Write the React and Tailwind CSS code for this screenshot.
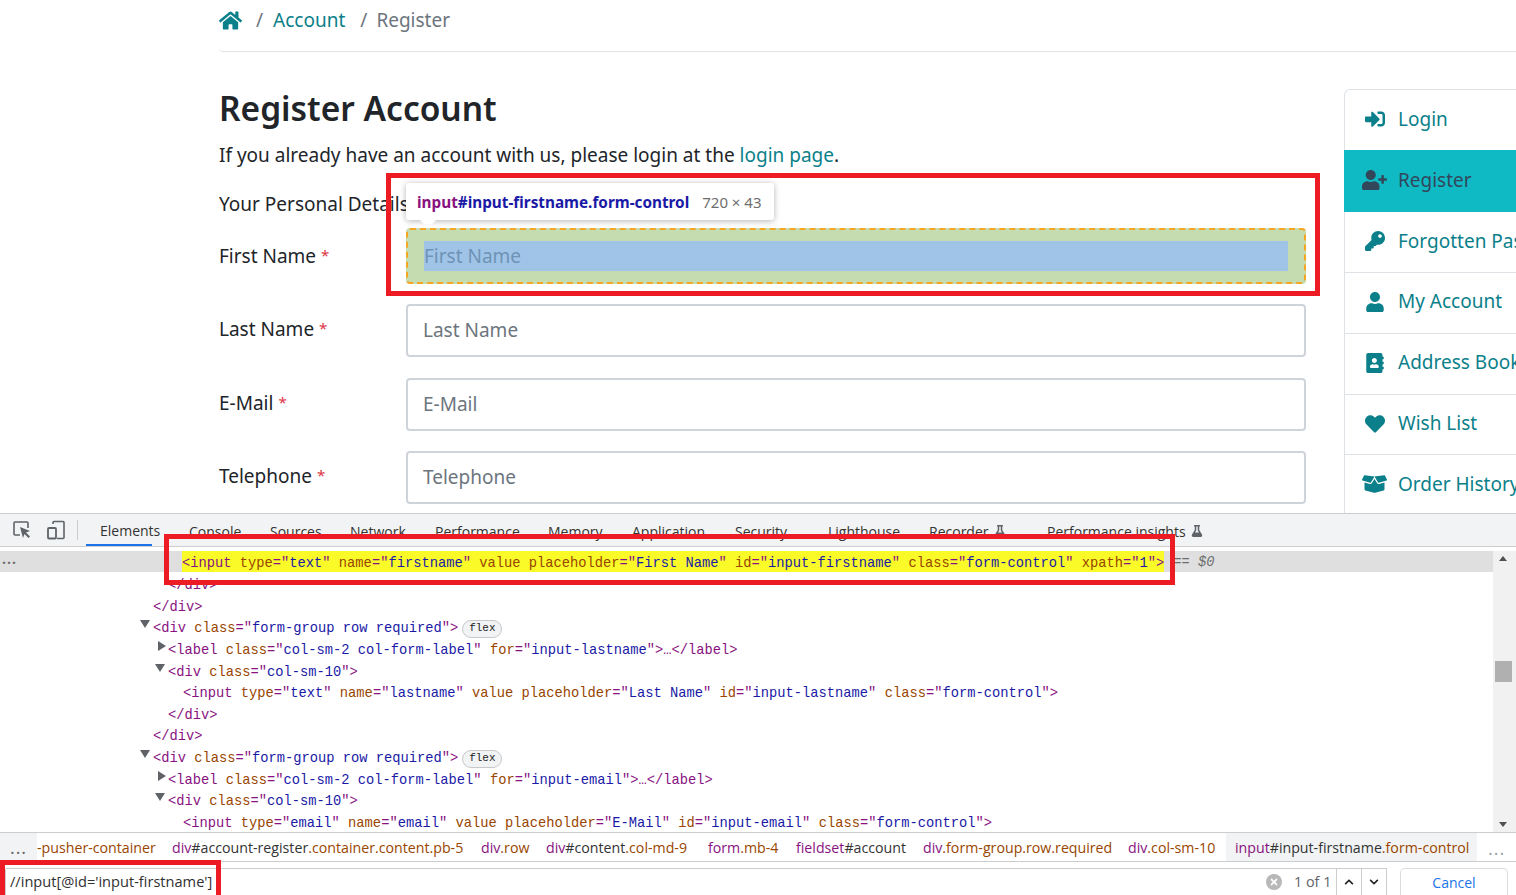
import React from "react";
import { FaHome, FaSignInAlt, FaUserPlus, FaKey, FaUser, FaAddressBook, FaHeart, FaBoxOpen, FaFlask, FaChevronUp, FaChevronDown, FaTimes } from "react-icons/fa";

const P = ({ children }) => <span className="text-[#881280]">{children}</span>;
const N = ({ children }) => <span className="text-[#994500]">{children}</span>;
const V = ({ children }) => <span className="text-[#1a1aa6]">{children}</span>;
const Attr = ({ n, v }) => (
  <>
    {" "}
    <N>{n}</N>
    <P>="</P>
    <V>{v}</V>
    <P>"</P>
  </>
);
const Open = ({ tag, attrs, end = ">" }) => (
  <>
    <P>{"<" + tag}</P>
    {attrs.map(([n, v]) => (
      <Attr key={n} n={n} v={v} />
    ))}
    <P>{end}</P>
  </>
);
const Tri = ({ open }) =>
  open ? (
    <span className="absolute left-[-13px] top-[5px] h-0 w-0 border-x-[5px] border-t-[8px] border-x-transparent border-t-[#5f6368]" />
  ) : (
    <span className="absolute left-[-10px] top-[4px] h-0 w-0 border-y-[5px] border-l-[8px] border-y-transparent border-l-[#5f6368]" />
  );
const Flex = () => (
  <span className="ml-[4px] inline-block h-[18px] w-[40px] rounded-[9px] border border-[#c8c8c8] bg-[#f1f3f4] text-center align-middle font-['Liberation_Mono'] text-[11px] leading-[15px] text-[#222]">
    flex
  </span>
);
const Line = ({ indent, children }) => (
  <div className={`relative h-[21.65px] pt-[3px] whitespace-pre leading-[21px] ${indent}`}>{children}</div>
);

const Row = ({ label, children }) => (
  <div className="flex h-[52px] items-center">
    <div className="relative top-[-1px] w-[187px] text-[19px] leading-[30px] text-[#212529]">
      {label}
      <span className="relative top-[-2px] ml-[5px] text-[15px] text-[#dc3545]">*</span>
    </div>
    {children}
  </div>
);
const TextInput = ({ ph }) => (
  <div className="flex h-[53px] w-[900px] items-center rounded-[4px] border-2 border-[#ced4da] px-[15px] text-[19px] text-[#6c757d]">{ph}</div>
);

const Side = ({ icon, label, active }) => (
  <div
    className={`flex items-center gap-[11px] pb-[2px] pl-[17px] text-[19px] whitespace-nowrap ${
      active ? "-mt-[1px] -ml-[1px] h-[62px] bg-[#0fbac5] pl-[18px] text-[#33475b]" : "h-[60.9px] border-b border-[#dee2e6] text-[#0b7f8a]"
    }`}
  >
    <span className="flex h-[20px] w-[25px] shrink-0 items-center justify-center">{icon}</span>
    {label}
  </div>
);

export default function App() {
  return (
    <div className="relative h-[895px] w-[1516px] overflow-hidden bg-white font-['Noto_Sans',sans-serif]">
      {/* page */}
      <div className="h-[513px] overflow-hidden pl-[219px]">
        <div className="flex h-[52px] items-center rounded-bl-[4px] border-b border-[#e3e3e3] pb-[11px] text-[19px]">
          <FaHome className="text-[23px] text-[#0b7f8a]" />
          <span className="ml-[14px] text-[#6c757d]">/</span>
          <span className="ml-[10px] text-[#0b7f8a]">Account</span>
          <span className="ml-[15px] text-[#6c757d]">/</span>
          <span className="ml-[9px] text-[#6c757d]">Register</span>
        </div>
        <div className="flex">
          <div className="w-[1087px]">
            <h1 className="mt-[32px] text-[33.5px] leading-[48px] font-semibold text-[#212529]">Register Account</h1>
            <p className="mt-[8px] text-[19px] leading-[30px] text-[#212529]">
              If you already have an account with us, please login at the <span className="text-[#0b7f8a]">login page</span>.
            </p>
            <div className="mt-[19px] text-[19px] leading-[30px] text-[#212529]">Your Personal Details</div>
            <div className="mt-[12px] flex flex-col gap-[21.5px]">
              <Row label="First Name">
                <div className="mb-[2px] flex h-[56px] w-[900px] items-center rounded-[4px] border-2 border-dashed border-[#f5a623] bg-[#c4dcb0] px-[16px]">
                  <div className="flex h-[30px] flex-1 items-center bg-[#9fc4e8] text-[19px] text-[#6f93b5]">First Name</div>
                </div>
              </Row>
              <Row label="Last Name"><TextInput ph="Last Name" /></Row>
              <Row label="E-Mail"><TextInput ph="E-Mail" /></Row>
              <Row label="Telephone"><TextInput ph="Telephone" /></Row>
            </div>
          </div>
          <div className="ml-[38px] mt-[37px] h-[425px] flex-1 rounded-tl-[6px] border-t border-l border-[#dee2e6]">
            <Side icon={<FaSignInAlt className="h-[20px] w-[20px]" />} label="Login" />
            <Side icon={<FaUserPlus className="h-[20px] w-[25px]" />} label="Register" active />
            <Side icon={<FaKey className="h-[20px] w-[20px]" />} label="Forgotten Password" />
            <Side icon={<FaUser className="h-[20px] w-[18px]" />} label="My Account" />
            <Side icon={<FaAddressBook className="h-[20px] w-[18px]" />} label="Address Book" />
            <Side icon={<FaHeart className="h-[20px] w-[20px]" />} label="Wish List" />
            <Side icon={<FaBoxOpen className="h-[20px] w-[25px]" />} label="Order History" />
          </div>
        </div>
      </div>

      {/* devtools */}
      <div className="flex h-[382px] flex-col border-t border-[#cdcdcd]">
        <div className="flex h-[33px] items-center border-b border-[#cdcdcd] bg-[#f1f3f4] font-['Open_Sans',sans-serif] text-[14px] text-[#333]">
          <div className="flex h-[20px] w-[78px] items-center gap-[14px] border-r border-[#cdcdcd] pl-[12px]">
            <svg width="20" height="20" viewBox="0 0 20 20" className="shrink-0">
              <path d="M8 15H3a1 1 0 0 1-1-1V3a1 1 0 0 1 1-1h12a1 1 0 0 1 1 1v5" fill="none" stroke="#5f6368" strokeWidth="1.6" />
              <path d="M8 7l10 4-4 1.6 4 4-1.5 1.5-4-4L11 18z" fill="#5f6368" />
            </svg>
            <svg width="20" height="20" viewBox="0 0 20 20" className="shrink-0">
              <path d="M7 4V2.5a1 1 0 0 1 1-1h9a1 1 0 0 1 1 1v15a1 1 0 0 1-1 1h-6" fill="none" stroke="#5f6368" strokeWidth="1.6" />
              <rect x="2" y="8" width="8" height="10.5" rx="1" fill="none" stroke="#5f6368" strokeWidth="1.8" />
            </svg>
          </div>
          <div className="ml-[8px] flex h-full items-center">
            <div className="flex h-full w-[66px] items-center border-b-2 border-[#1a73e8] pt-[2px] pl-[14px]">Elements</div>
            <div className="ml-[37px] flex h-full items-center pt-[2px]">
              <div className="w-[81px]">Console</div>
              <div className="w-[80px]">Sources</div>
              <div className="w-[85px]">Network</div>
              <div className="w-[113px]">Performance</div>
              <div className="w-[84px]">Memory</div>
              <div className="w-[103px]">Application</div>
              <div className="w-[93px]">Security</div>
              <div className="w-[101px]">Lighthouse</div>
              <div className="flex w-[118px] items-center gap-[5px]">Recorder <FaFlask className="text-[12px] text-[#5f6368]" /></div>
              <div className="flex items-center gap-[5px] whitespace-nowrap">Performance insights <FaFlask className="text-[12px] text-[#5f6368]" /></div>
            </div>
          </div>
        </div>

        <div className="flex h-[285px] overflow-hidden pt-[4px] font-['Liberation_Mono',monospace] text-[13.75px] text-[#881280]">
          <div className="min-w-0 flex-1 overflow-hidden">
            <div className="relative flex h-[21px] items-center bg-[#dfdfdf] pl-[182px] whitespace-pre">
              <span className="absolute left-[2px] top-[1px] font-['Open_Sans'] text-[14px] leading-[14px] font-bold tracking-[1px] text-[#6e6e6e]">...</span>
              <span className="h-full bg-[#fafa28] leading-[26px]">
                <Open tag="input" attrs={[["type", "text"], ["name", "firstname"]]} end="" /> <N>value</N> <N>placeholder</N><P>="</P><V>First Name</V><P>"</P>
                <Attr n="id" v="input-firstname" />
                <Attr n="class" v="form-control" />
                <Attr n="xpath" v="1" />
                <P>{">"}</P>
              </span>
              <span className="relative top-[2px] ml-[9px] text-[#6e6e6e] italic">== $0</span>
            </div>
            <Line indent="pl-[168px]"><P>{"</div>"}</P></Line>
            <Line indent="pl-[153px]"><P>{"</div>"}</P></Line>
            <Line indent="ml-[153px]"><Tri open /><Open tag="div" attrs={[["class", "form-group row required"]]} /><Flex /></Line>
            <Line indent="ml-[168px]"><Tri /><Open tag="label" attrs={[["class", "col-sm-2 col-form-label"], ["for", "input-lastname"]]} /><P>…</P><P>{"</label>"}</P></Line>
            <Line indent="ml-[168px]"><Tri open /><Open tag="div" attrs={[["class", "col-sm-10"]]} /></Line>
            <Line indent="pl-[183px]"><Open tag="input" attrs={[["type", "text"], ["name", "lastname"]]} end="" /> <N>value</N> <N>placeholder</N><P>="</P><V>Last Name</V><P>"</P><Attr n="id" v="input-lastname" /><Attr n="class" v="form-control" /><P>{">"}</P></Line>
            <Line indent="pl-[168px]"><P>{"</div>"}</P></Line>
            <Line indent="pl-[153px]"><P>{"</div>"}</P></Line>
            <Line indent="ml-[153px]"><Tri open /><Open tag="div" attrs={[["class", "form-group row required"]]} /><Flex /></Line>
            <Line indent="ml-[168px]"><Tri /><Open tag="label" attrs={[["class", "col-sm-2 col-form-label"], ["for", "input-email"]]} /><P>…</P><P>{"</label>"}</P></Line>
            <Line indent="ml-[168px]"><Tri open /><Open tag="div" attrs={[["class", "col-sm-10"]]} /></Line>
            <Line indent="pl-[183px]"><Open tag="input" attrs={[["type", "email"], ["name", "email"]]} end="" /> <N>value</N> <N>placeholder</N><P>="</P><V>E-Mail</V><P>"</P><Attr n="id" v="input-email" /><Attr n="class" v="form-control" /><P>{">"}</P></Line>
          </div>
          <div className="relative flex w-[23px] shrink-0 flex-col justify-between bg-[#f1f1f1] pt-[5px] pr-[4px] pb-[5px]">
            <span className="mx-auto h-0 w-0 border-x-[4px] border-b-[5px] border-x-transparent border-b-[#505050]" />
            <span className="absolute top-[110px] left-[2px] h-[21px] w-[17px] bg-[#b0b0b0]" />
            <span className="mx-auto h-0 w-0 border-x-[4px] border-t-[5px] border-x-transparent border-t-[#505050]" />
          </div>
        </div>

        <div className="flex h-[30px] items-center border-y border-[#cdcdcd] bg-white pt-[1px] font-['Open_Sans',sans-serif] text-[14.2px] whitespace-nowrap">
          <div className="-mt-[1px] flex h-[28px] w-[37px] shrink-0 items-end justify-center bg-[#f1f3f4] pb-[5px] text-[18px] leading-[18px] tracking-[1px] text-[#5f6368]">...</div>
          <span className="w-[135px] shrink-0 text-[#994500]">-pusher-container</span>
          <span className="w-[309px] shrink-0"><P>div</P><span className="text-[#333]">#account-register</span><N>.container.content.pb-5</N></span>
          <span className="w-[65px] shrink-0"><P>div</P><N>.row</N></span>
          <span className="w-[162px] shrink-0"><P>div</P><span className="text-[#333]">#content</span><N>.col-md-9</N></span>
          <span className="w-[88px] shrink-0"><P>form</P><N>.mb-4</N></span>
          <span className="w-[127px] shrink-0"><P>fieldset</P><span className="text-[#333]">#account</span></span>
          <span className="w-[205px] shrink-0"><P>div</P><N>.form-group.row.required</N></span>
          <span className="w-[98px] shrink-0"><P>div</P><N>.col-sm-10</N></span>
          <span className="-mt-[1px] flex h-[28px] w-[251px] shrink-0 items-center bg-[#f1f3f4] pt-[1px] pl-[9px] text-[14.2px]"><P>input</P><span className="text-[#333]">#input-firstname</span><N>.form-control</N></span>
          <span className="ml-[11px] text-[18px] leading-[18px] tracking-[1px] text-[#9aa0a6]">...</span>
        </div>

        <div className="flex min-h-0 flex-1 items-end pr-[8px] pl-[5px]">
          <div className="flex h-[27px] flex-1 items-center rounded-tl-[2px] border-t border-r border-l border-[#cdcdcd] font-['Open_Sans',sans-serif] text-[14.6px] text-[#303030]">
            <span className="ml-[4px] flex-1">//input[@id='input-firstname']</span>
            <span className="flex h-[16px] w-[16px] items-center justify-center rounded-full bg-[#b8b8b8] text-[10px] text-white"><FaTimes /></span>
            <span className="ml-[12px] w-[42px] text-[14.4px] text-[#5f6368]">1 of 1</span>
            <span className="flex h-[26px] w-[25px] items-center justify-center border-l border-[#cdcdcd] text-[10px] text-[#222]"><FaChevronUp /></span>
            <span className="flex h-[26px] w-[25px] items-center justify-center border-l border-[#cdcdcd] text-[10px] text-[#222]"><FaChevronDown /></span>
          </div>
          <div className="ml-[13px] flex h-[27px] w-[108px] items-center justify-center rounded-t-[5px] border-t border-r border-l border-[#dadce0] font-['Open_Sans',sans-serif] text-[14px] text-[#1a73e8]">Cancel</div>
        </div>
      </div>

      {/* overlays */}
      <div className="absolute top-[173px] left-[386px] h-[123px] w-[934px] border-[5px] border-[#ed1c24]" />
      <div className="absolute top-[534px] left-[164px] h-[51px] w-[1011px] border-[5px] border-[#ed1c24]" />
      <div className="absolute top-[860px] left-0 h-[45px] w-[221px] border-[5px] border-[#ed1c24]" />
      <div className="absolute top-[183px] left-[406px] flex h-[37px] w-[368px] items-center rounded-[3px] bg-white pt-[1px] pl-[11px] whitespace-nowrap shadow-[0_1px_6px_rgba(0,0,0,0.3)]">
        <span className="font-['Noto_Sans'] text-[15.3px] font-bold text-[#1a1aa6]"><span className="text-[#881280]">input</span>#input-firstname.form-control</span>
        <span className="ml-[13px] text-[15px] text-[#6e6e6e]">720 × 43</span>
        <span className="absolute top-[37px] left-[14px] h-0 w-0 border-x-[8px] border-t-[8px] border-x-transparent border-t-white" />
      </div>
    </div>
  );
}
